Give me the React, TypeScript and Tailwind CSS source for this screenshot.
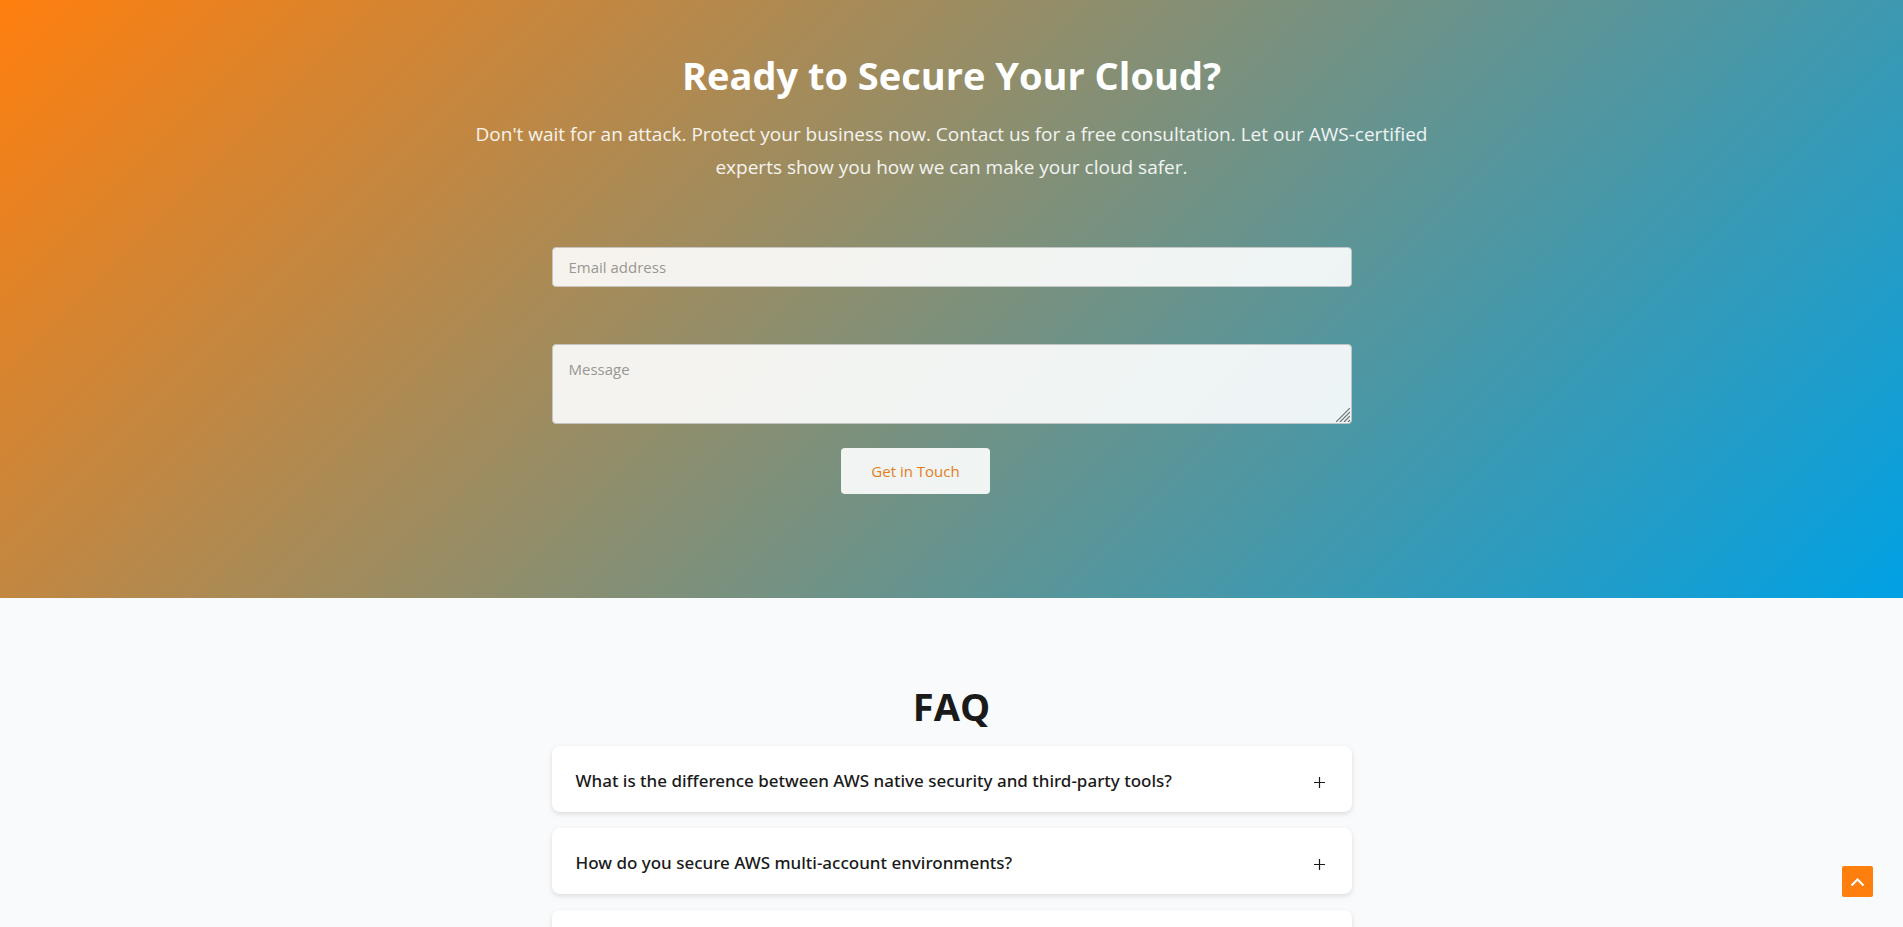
import { useState } from "react";

const questions = [
  "What is the difference between AWS native security and third-party tools?",
  "How do you secure AWS multi-account environments?",
  "How often should an AWS security audit be run?",
];

function ContactSection() {
  return (
    <section className="bg-[linear-gradient(135deg,#ff7f0e_0%,#00a1e4_100%)] px-6 pt-[47px] pb-[104px] text-center text-white">
      <h2 className="text-[38px] leading-14 font-bold">Ready to Secure Your Cloud?</h2>
      <p className="mx-auto mt-[15px] max-w-[980px] text-[19px] leading-[33px] text-white/90">
        Don't wait for an attack. Protect your business now. Contact us for a free consultation. Let our AWS-certified
        experts show you how we can make your cloud safer.
      </p>
      <form className="mx-auto mt-[63px] max-w-[800px]" onSubmit={(e) => e.preventDefault()}>
        <input
          type="email"
          aria-label="Email address"
          placeholder="Email address"
          className="block h-10 w-full rounded border border-[#ccc] bg-white px-4 text-[15px] text-gray-800 opacity-90 placeholder:text-[#999]"
        />
        <div className="relative mt-[57px] opacity-90">
          <textarea
            aria-label="Message"
            placeholder="Message"
            className="block h-20 w-full resize-none rounded border border-[#ccc] bg-white px-4 py-3 text-[15px] leading-6 text-gray-800 placeholder:text-[#999]"
          />
          <svg
            viewBox="0 0 14 14"
            className="pointer-events-none absolute right-0.5 bottom-0.5 size-3.5 stroke-[#707070]"
            strokeWidth="1.2"
            aria-hidden="true"
          >
            <path d="M0 14 14 0M4 14 14 4M8 14l6-6M12 14l2-2" />
          </svg>
        </div>
        <button
          type="submit"
          className="mt-6 mr-[72px] h-[46px] w-[149px] rounded bg-white text-[15px] text-[#f07c12] opacity-90"
        >
          Get in Touch
        </button>
      </form>
    </section>
  );
}

function FaqSection() {
  const [open, setOpen] = useState<number | null>(null);
  return (
    <section className="bg-[#f9fafc] px-6 pt-20 pb-20">
      <h2 className="text-center text-[38px] leading-14 font-bold text-[#1a1a1a]">FAQ</h2>
      <div className="mx-auto mt-3 flex max-w-[800px] flex-col gap-4">
        {questions.map((question, i) => (
          <div key={question} className="rounded-lg bg-white shadow-[0_2px_5px_rgba(0,0,0,0.12)]">
            <button
              type="button"
              aria-expanded={open === i}
              onClick={() => setOpen(open === i ? null : i)}
              className="flex h-[66px] w-full items-center justify-between px-6 pt-1 text-left font-['Noto_Sans',sans-serif] text-[17px] leading-6 font-medium text-[#1a1a1a]"
            >
              <span>{question}</span>
              <svg viewBox="0 0 16 16" className="mt-1 size-4 stroke-[#1a1a1a]" strokeWidth="1.2" aria-hidden="true">
                <path d="M2 7.500h11M7.500 2v11" />
              </svg>
            </button>
          </div>
        ))}
      </div>
    </section>
  );
}

export default function App() {
  return (
    <main className="h-screen overflow-x-hidden overflow-y-auto bg-[#f9fafc] font-['Open_Sans',sans-serif] [scrollbar-width:none]">
      <ContactSection />
      <FaqSection />
      <a
        href="#top"
        aria-label="Back to top"
        className="fixed right-[30px] bottom-[30px] flex size-[31px] items-center justify-center rounded-xs bg-[#ff7f0e]"
      >
        <svg viewBox="0 0 16 16" className="size-4 fill-none stroke-white" strokeWidth="2" aria-hidden="true">
          <path d="M1.500 11.500 7.500 5.500l6 6" />
        </svg>
      </a>
    </main>
  );
}
